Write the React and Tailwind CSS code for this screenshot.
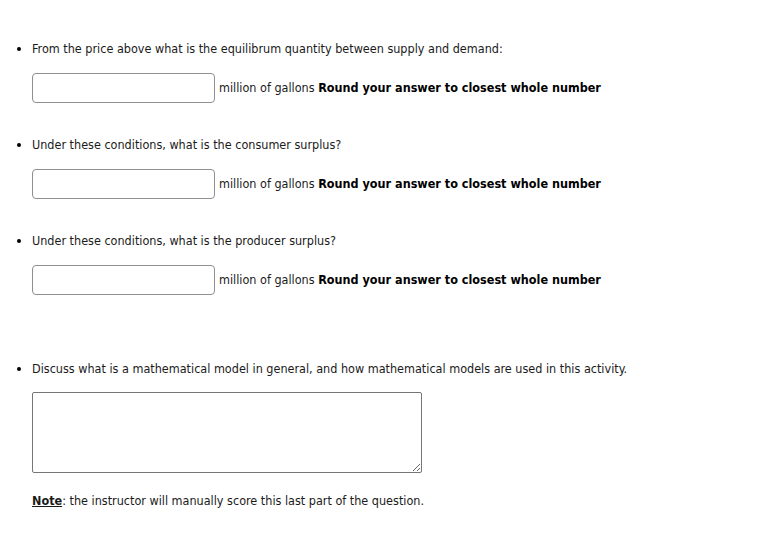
import React from "react";

const questions = [
    "From the price above what is the equilibrum quantity between supply and demand:",
    "Under these conditions, what is the consumer surplus?",
    "Under these conditions, what is the producer surplus?",
];

const AnswerRow = () => (
    <div className="flex items-center gap-[4px] mt-[15px]">
        <input
            type="text"
            className="w-[183px] h-[30px] bg-white border border-[#8f8f8f] rounded-[4px] px-2 outline-none"
        />
        <span>
            million of gallons <b className="font-bold text-black">Round your answer to closest whole number</b>
        </span>
    </div>
);

export default function App() {
    return (
        <div
            className="min-h-screen bg-white text-[#1a1a1a] text-[12.5px] leading-[18px] pt-[40px]"
            style={{ fontFamily: "'DejaVu Sans Condensed', 'DejaVu Sans', sans-serif" }}
        >
            <ul className="list-disc pl-8 marker:text-black">
                {questions.map((q) => (
                    <li key={q} className="mb-[33px]">
                        <p>{q}</p>
                        <AnswerRow />
                    </li>
                ))}

                {/* Essay question */}
                <li className="mt-[65px]">
                    <p>Discuss what is a mathematical model in general, and how mathematical models are used in this activity.</p>
                    <textarea className="block mt-[14px] w-[390px] h-[81px] bg-white border border-[#767676] rounded-[2px] outline-none" />
                    <p className="mt-[19px]">
                        <u className="font-bold">Note</u>: the instructor will manually score this last part of the question.
                    </p>
                </li>
            </ul>
        </div>
    );
}
